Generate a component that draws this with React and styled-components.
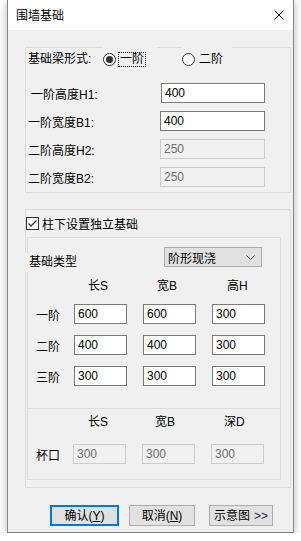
import React from "react";
import styled, { createGlobalStyle } from "styled-components";

const GlobalStyle = createGlobalStyle`
  html, body { margin: 0; padding: 0; background: #ffffff; }
  body {
    font-family: "Liberation Sans", "Noto Sans CJK SC", sans-serif;
    font-size: 12px;
    color: #000;
  }
  * { box-sizing: border-box; }
`;

const Window = styled.div`
  margin-left: 7px;
  width: 287px;
  height: 533px;
  border: 1px solid #858585;
  border-top: none;
  background: #f0f0f0;
  box-shadow: 0 2px 9px rgba(0, 0, 0, 0.3);
  display: flex;
  flex-direction: column;
`;

const TitleBar = styled.div`
  height: 30px;
  background: #ffffff;
  display: flex;
  align-items: center;
  padding-left: 8px;
  padding-right: 9px;
  flex-shrink: 0;
`;

const Title = styled.span`
  flex: 1;
  font-size: 12px;
  line-height: 16px;
  font-family: "Noto Sans CJK SC", sans-serif;
`;

const CloseButton = styled.span`
  width: 10px;
  height: 10px;
  display: flex;
`;

const Body = styled.div`
  flex: 1;
  padding: 17px 2px 0 17px;
  display: flex;
  flex-direction: column;
`;

const Group = styled.div`
  border: 1px solid #dcdcdc;
  height: ${(p) => p.$h}px;
  margin-top: ${(p) => p.$mt || 0}px;
  display: flex;
  flex-direction: column;
`;

const RadioRow = styled.div`
  margin-top: -2px;
  height: 26px;
  display: flex;
  align-items: center;
  padding-left: 2px;
`;

const FieldLabel = styled.span`
  width: ${(p) => p.$w}px;
  line-height: 16px;
  white-space: nowrap;
`;

const RadioItem = styled.label`
  height: 26px;
  width: ${(p) => p.$w}px;
  margin-left: ${(p) => p.$ml || 0}px;
  background: #f0f0f0;
  display: flex;
  align-items: center;
  gap: 2px;
`;

const RadioCircle = styled.span`
  width: 13px;
  height: 13px;
  border: 1px solid #333;
  border-radius: 50%;
  background: #fff;
  display: flex;
  align-items: center;
  justify-content: center;
  flex-shrink: 0;
  &::after {
    content: "";
    width: 7px;
    height: 7px;
    border-radius: 50%;
    background: ${(p) => (p.$checked ? "#333" : "transparent")};
  }
`;

const RadioText = styled.span`
  line-height: 13px;
  padding: 0 1px;
  border: 1px dotted ${(p) => (p.$focus ? "#000" : "transparent")};
`;

const FormList = styled.div`
  margin-top: 11px;
  padding-left: 2px;
  display: flex;
  flex-direction: column;
  gap: 8px;
`;

const FormRow = styled.div`
  display: grid;
  grid-template-columns: 132px 105px;
  align-items: center;
  height: 20px;
`;

const RowLabel = styled.span`
  padding-left: ${(p) => p.$indent || 0}px;
  white-space: nowrap;
`;

const TextBox = styled.div`
  height: 20px;
  width: ${(p) => p.$w || 105}px;
  margin-left: ${(p) => p.$ml || 0}px;
  border: 1px solid ${(p) => (p.$disabled ? "#cccccc" : "#7a7a7a")};
  background: ${(p) => (p.$disabled ? "#f0f0f0" : "#ffffff")};
  color: ${(p) => (p.$disabled ? "#6d6d6d" : "#000")};
  padding-left: 3px;
  display: flex;
  align-items: center;
  font-size: 12px;
`;

const CheckRow = styled.label`
  margin-top: 7px;
  height: 13px;
  display: flex;
  align-items: center;
  gap: 3px;
`;

const CheckBox = styled.span`
  width: 13px;
  height: 13px;
  border: 1px solid #333;
  background: #fff;
  display: flex;
  flex-shrink: 0;
`;

const InnerBox = styled.div`
  margin: 7px 9px 7px 1px;
  border: 1px solid #dcdcdc;
  height: 243px;
  display: flex;
  flex-direction: column;
`;

const Section = styled.div`
  height: ${(p) => p.$h}px;
  padding-top: ${(p) => p.$pt}px;
  border-top: ${(p) => (p.$divider ? "1px solid #dcdcdc" : "none")};
  display: flex;
  flex-direction: column;
`;

const TypeRow = styled.div`
  display: flex;
  align-items: flex-start;
  height: 25px;
`;

const TypeLabel = styled.span`
  margin-top: 6px;
  margin-left: -3px;
  padding-left: 4px;
  width: 139px;
  height: 19px;
  line-height: 19px;
  background: #f0f0f0;
`;

const Select = styled.div`
  width: 98px;
  height: 20px;
  border: 1px solid #adadad;
  background: #e1e1e1;
  display: flex;
  align-items: center;
  padding-left: 3px;
  padding-right: 6px;
  justify-content: space-between;
`;

const Grid = styled.div`
  display: grid;
  grid-template-columns: ${(p) => p.$first}px 53px 53px 53px;
  column-gap: 16px;
  margin-top: ${(p) => p.$mt}px;
  align-items: center;
`;

const Header = styled.span`
  padding-left: ${(p) => p.$pl}px;
  height: 16px;
  line-height: 16px;
  white-space: nowrap;
`;

const RowTag = styled.span`
  padding-left: 8px;
  white-space: nowrap;
`;

const Rows = styled.div`
  display: flex;
  flex-direction: column;
  gap: 11px;
  margin-top: 10px;
`;

const ButtonBar = styled.div`
  margin-top: 17px;
  margin-left: -17px;
  padding-left: 42px;
  display: flex;
  align-items: center;
`;

const Button = styled.button`
  width: ${(p) => p.$w}px;
  height: 21px;
  margin-left: ${(p) => p.$ml || 0}px;
  border: ${(p) => (p.$default ? "2px solid #0078d7" : "1px solid #adadad")};
  background: #e1e1e1;
  font-family: "Liberation Sans", "Noto Sans CJK SC", sans-serif;
  font-size: 12px;
  color: #000;
  padding: 0;
  display: flex;
  align-items: center;
  justify-content: center;
  line-height: 1;
  u { text-decoration: underline; }
`;

const Arrows = styled.span`
  margin-left: 4px;
  color: #1c1c5a;
`;

const beamRows = [
  { label: "一阶高度H1:", value: "400", indent: 3, ml: 1, w: 104 },
  { label: "一阶宽度B1:", value: "400" },
  { label: "二阶高度H2:", value: "250", disabled: true },
  { label: "二阶宽度B2:", value: "250", disabled: true },
];

const stepRows = [
  { label: "一阶", values: ["600", "600", "300"] },
  { label: "二阶", values: ["400", "400", "300"] },
  { label: "三阶", values: ["300", "300", "300"] },
];

export default function App() {
  return (
    <>
      <GlobalStyle />
      <Window>
        <TitleBar>
          <Title>围墙基础</Title>
          <CloseButton>
            <svg width="10" height="10" viewBox="0 0 10 10">
              <path d="M0.5 0.5 L9.5 9.5 M9.5 0.5 L0.5 9.5" stroke="#000" strokeWidth="1" />
            </svg>
          </CloseButton>
        </TitleBar>
        <Body>
          <Group $h={146}>
            <RadioRow>
              <FieldLabel $w={75}>基础梁形式:</FieldLabel>
              <RadioItem $w={54}>
                <RadioCircle $checked />
                <RadioText $focus>一阶</RadioText>
              </RadioItem>
              <RadioItem $w={50} $ml={25}>
                <RadioCircle />
                <RadioText>二阶</RadioText>
              </RadioItem>
            </RadioRow>
            <FormList>
              {beamRows.map((r) => (
                <FormRow key={r.label}>
                  <RowLabel $indent={r.indent}>{r.label}</RowLabel>
                  <TextBox $disabled={r.disabled} $ml={r.ml} $w={r.w}>
                    {r.value}
                  </TextBox>
                </FormRow>
              ))}
            </FormList>
          </Group>
          <Group $h={279} $mt={16}>
            <CheckRow>
              <CheckBox>
                <svg width="11" height="11" viewBox="0 0 11 11">
                  <path d="M1.5 5.5 L4 8 L9.5 2.5" stroke="#333" strokeWidth="1.3" fill="none" />
                </svg>
              </CheckBox>
              <span>柱下设置独立基础</span>
            </CheckRow>
            <InnerBox>
              <Section $h={170} $pt={9}>
                <TypeRow>
                  <TypeLabel>基础类型</TypeLabel>
                  <Select>
                    <span>阶形现浇</span>
                    <svg width="9" height="5" viewBox="0 0 9 5">
                      <path d="M0.5 0.5 L4.5 4.5 L8.5 0.5" stroke="#444" strokeWidth="1" fill="none" />
                    </svg>
                  </Select>
                </TypeRow>
                <Grid $first={30} $mt={6}>
                  <span />
                  <Header $pl={14}>长S</Header>
                  <Header $pl={14}>宽B</Header>
                  <Header $pl={15}>高H</Header>
                </Grid>
                <Rows>
                  {stepRows.map((r) => (
                    <Grid key={r.label} $first={30} $mt={0}>
                      <RowTag>{r.label}</RowTag>
                      {r.values.map((v, i) => (
                        <TextBox key={i} $w={53}>
                          {v}
                        </TextBox>
                      ))}
                    </Grid>
                  ))}
                </Rows>
              </Section>
              <Section $h={71} $pt={5} $divider>
                <Grid $first={29} $mt={0}>
                  <span />
                  <Header $pl={15}>长S</Header>
                  <Header $pl={13}>宽B</Header>
                  <Header $pl={13}>深D</Header>
                </Grid>
                <Grid $first={29} $mt={14}>
                  <RowTag>杯口</RowTag>
                  {["300", "300", "300"].map((v, i) => (
                    <TextBox key={i} $w={53} $disabled>
                      {v}
                    </TextBox>
                  ))}
                </Grid>
              </Section>
            </InnerBox>
          </Group>
          <ButtonBar>
            <Button $w={69} $default>
              确认(<u>Y</u>)
            </Button>
            <Button $w={66} $ml={10}>
              取消(<u>N</u>)
            </Button>
            <Button $w={64} $ml={14}>
              示意图<Arrows>&gt;&gt;</Arrows>
            </Button>
          </ButtonBar>
        </Body>
      </Window>
    </>
  );
}
